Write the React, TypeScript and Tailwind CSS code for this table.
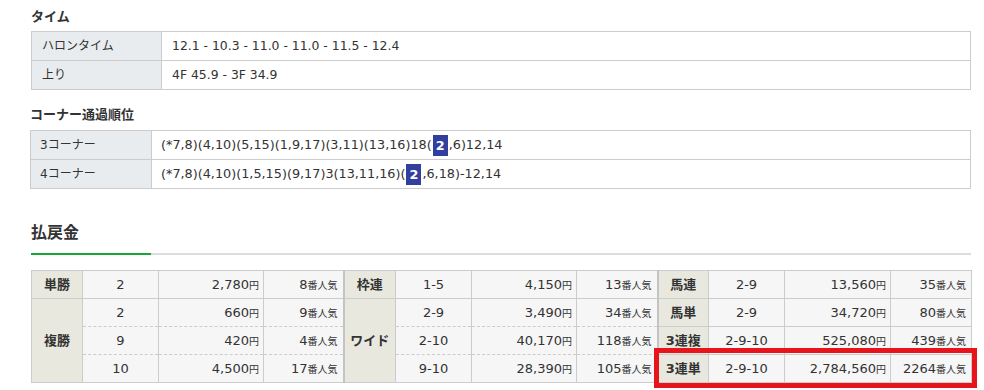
import React from "react";

const FONT = "font-['DejaVu_Sans','Noto_Sans_CJK_JP',sans-serif]";

function Hi() {
  return (
    <span className="inline-block bg-[#323f9f] text-white font-bold px-[3px] leading-[21px] align-middle mx-[1px]">
      2
    </span>
  );
}

function Yen({ v }: { v: string }) {
  return (
    <>
      {v}
      <span className="text-[10px]">円</span>
    </>
  );
}
function Pop({ v }: { v: string }) {
  return (
    <>
      {v}
      <span className="text-[10px]">番人気</span>
    </>
  );
}

const lab = "bg-[#e8e8df] border border-[#ccc] text-center font-bold text-[13px] p-0";
const lab2 = "bg-[#e8e8df] border border-[#ccc] border-l-2 border-l-[#c4c4c4] text-center font-bold text-[13px] p-0";
const cell = "bg-[#f6f6f6] border border-[#ccc] p-0";
const dB = "[border-bottom-style:dashed]";
const dT = "[border-top-style:dashed]";

export default function App() {
  return (
    <div className={`${FONT} text-[#333] bg-white w-[984px] h-[390px] overflow-hidden pl-[31px] pt-[7px]`}>
      <div className="w-[940px]">
        <div className="h-[20px] leading-[20px] font-bold text-[13px] mb-[4px]">タイム</div>
        <table className="w-full border-collapse table-fixed text-[12px]">
          <colgroup>
            <col className="w-[130px]" />
            <col />
          </colgroup>
          <tbody>
            <tr className="h-[29px]">
              <td className="bg-[#e9ecef] border border-[#ccc] pl-[10px] p-0">ハロンタイム</td>
              <td className="border border-[#ccc] pl-[10px] p-0 text-[12.4px]">12.1 - 10.3 - 11.0 - 11.0 - 11.5 - 12.4</td>
            </tr>
            <tr className="h-[29px]">
              <td className="bg-[#e9ecef] border border-[#ccc] pl-[10px] p-0">上り</td>
              <td className="border border-[#ccc] pl-[10px] p-0 text-[12.4px]">4F 45.9 - 3F 34.9</td>
            </tr>
          </tbody>
        </table>

        <div className="h-[20px] leading-[20px] font-bold text-[13px] mt-[15px] mb-[5px] -ml-[1px]">コーナー通過順位</div>
        <table className="w-[941px] -ml-[1px] border-collapse table-fixed text-[12px]">
          <colgroup>
            <col className="w-[121px]" />
            <col />
          </colgroup>
          <tbody>
            <tr className="h-[29px]">
              <td className="bg-[#e9ecef] border border-[#ccc] pl-[9px] p-0">3コーナー</td>
              <td className="border border-[#ccc] pl-[9px] p-0 text-[12.8px]">
                (*7,8)(4,10)(5,15)(1,9,17)(3,11)(13,16)18(<Hi />,6)12,14
              </td>
            </tr>
            <tr className="h-[29px]">
              <td className="bg-[#e9ecef] border border-[#ccc] pl-[9px] p-0">4コーナー</td>
              <td className="border border-[#ccc] pl-[9px] p-0 text-[12.8px]">
                (*7,8)(4,10)(1,5,15)(9,17)3(13,11,16)(<Hi />,6,18)-12,14
              </td>
            </tr>
          </tbody>
        </table>

        <div className="h-[24px] leading-[24px] font-bold text-[16px] mt-[32px]">払戻金</div>
        <div className="mt-[8px] flex h-[2px]">
          <div className="w-[120px] bg-[#16a832]" />
          <div className="flex-1 bg-[#dddddd]" />
        </div>

        <div className="relative mt-[15px]">
          <table className="w-full border-collapse table-fixed text-[13px]">
            <colgroup>
              <col className="w-[51px]" />
              <col className="w-[76px]" />
              <col className="w-[105px]" />
              <col className="w-[80px]" />
              <col className="w-[52px]" />
              <col className="w-[76px]" />
              <col className="w-[105px]" />
              <col className="w-[81px]" />
              <col className="w-[51px]" />
              <col className="w-[76px]" />
              <col className="w-[106px]" />
              <col className="w-[81px]" />
            </colgroup>
            <tbody>
              <tr className="h-[28px]">
                <td className={lab}>単勝</td>
                <td className={`${cell} text-center`}>2</td>
                <td className={`${cell} text-right pr-[4px]`}><Yen v="2,780" /></td>
                <td className={`${cell} text-right pr-[5px]`}><Pop v="8" /></td>
                <td className={lab2}>枠連</td>
                <td className={`${cell} text-center`}>1-5</td>
                <td className={`${cell} text-right pr-[4px]`}><Yen v="4,150" /></td>
                <td className={`${cell} text-right pr-[5px]`}><Pop v="13" /></td>
                <td className={lab2}>馬連</td>
                <td className={`${cell} text-center`}>2-9</td>
                <td className={`${cell} text-right pr-[4px]`}><Yen v="13,560" /></td>
                <td className={`${cell} text-right pr-[5px]`}><Pop v="35" /></td>
              </tr>
              <tr className="h-[28px]">
                <td className={lab} rowSpan={3}>複勝</td>
                <td className={`${cell} ${dB} text-center`}>2</td>
                <td className={`${cell} ${dB} text-right pr-[4px]`}><Yen v="660" /></td>
                <td className={`${cell} ${dB} text-right pr-[5px]`}><Pop v="9" /></td>
                <td className={lab2} rowSpan={3}>ワイド</td>
                <td className={`${cell} ${dB} text-center`}>2-9</td>
                <td className={`${cell} ${dB} text-right pr-[4px]`}><Yen v="3,490" /></td>
                <td className={`${cell} ${dB} text-right pr-[5px]`}><Pop v="34" /></td>
                <td className={lab2}>馬単</td>
                <td className={`${cell} text-center`}>2-9</td>
                <td className={`${cell} text-right pr-[4px]`}><Yen v="34,720" /></td>
                <td className={`${cell} text-right pr-[5px]`}><Pop v="80" /></td>
              </tr>
              <tr className="h-[28px]">
                <td className={`${cell} ${dT} ${dB} text-center`}>9</td>
                <td className={`${cell} ${dT} ${dB} text-right pr-[4px]`}><Yen v="420" /></td>
                <td className={`${cell} ${dT} ${dB} text-right pr-[5px]`}><Pop v="4" /></td>
                <td className={`${cell} ${dT} ${dB} text-center`}>2-10</td>
                <td className={`${cell} ${dT} ${dB} text-right pr-[4px]`}><Yen v="40,170" /></td>
                <td className={`${cell} ${dT} ${dB} text-right pr-[5px]`}><Pop v="118" /></td>
                <td className={lab2}>3連複</td>
                <td className={`${cell} text-center`}>2-9-10</td>
                <td className={`${cell} text-right pr-[4px]`}><Yen v="525,080" /></td>
                <td className={`${cell} text-right pr-[5px]`}><Pop v="439" /></td>
              </tr>
              <tr className="h-[28px]">
                <td className={`${cell} ${dT} text-center`}>10</td>
                <td className={`${cell} ${dT} text-right pr-[4px]`}><Yen v="4,500" /></td>
                <td className={`${cell} ${dT} text-right pr-[5px]`}><Pop v="17" /></td>
                <td className={`${cell} ${dT} text-center`}>9-10</td>
                <td className={`${cell} ${dT} text-right pr-[4px]`}><Yen v="28,390" /></td>
                <td className={`${cell} ${dT} text-right pr-[5px]`}><Pop v="105" /></td>
                <td className={lab2}>3連単</td>
                <td className={`${cell} text-center`}>2-9-10</td>
                <td className={`${cell} text-right pr-[4px]`}><Yen v="2,784,560" /></td>
                <td className={`${cell} text-right pr-[5px]`}><Pop v="2264" /></td>
              </tr>
            </tbody>
          </table>
          <div className="absolute left-[623px] top-[78px] w-[323px] h-[40px] border-[5px] border-[#e8141c] pointer-events-none" />
        </div>
      </div>
    </div>
  );
}
